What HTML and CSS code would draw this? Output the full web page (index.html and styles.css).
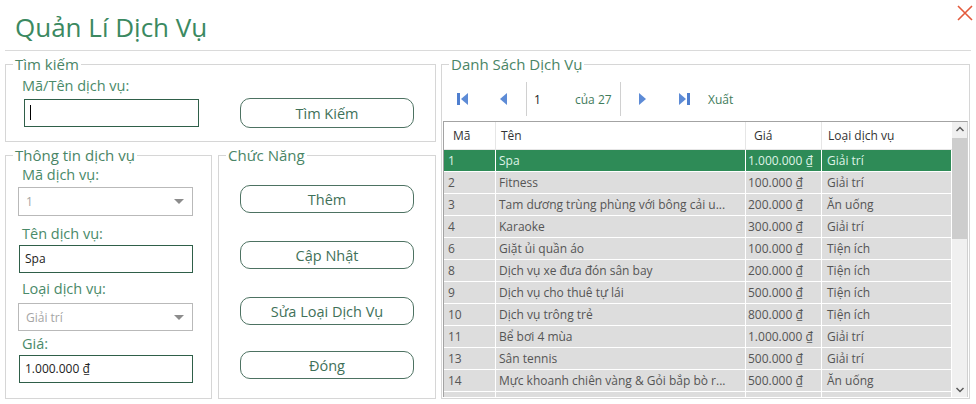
FILE: index.html
```html
<!DOCTYPE html>
<html lang="vi">
<head>
<meta charset="utf-8">
<title>Quản Lí Dịch Vụ</title>
<link rel="stylesheet" href="styles.css">
</head>
<body>
<div class="app">
  <header class="titlebar">
    <h1 class="title">Quản Lí Dịch Vụ</h1>
    <button class="close" aria-label="Đóng">
      <svg width="16" height="16" viewBox="0 0 16 16"><path d="M1 1 L15 15 M15 1 L1 15" stroke="#e35a3c" stroke-width="1.6" fill="none"/></svg>
    </button>
  </header>
  <main class="content">
    <div class="left">
      <fieldset class="group search">
        <legend>Tìm kiếm</legend>
        <div class="lbl lbl-search">Mã/Tên dịch vụ:</div>
        <div class="search-row">
          <div class="txt txt-search"><span class="caret"></span></div>
          <button class="btn btn-search">Tìm Kiếm</button>
        </div>
      </fieldset>
      <div class="left-bottom">
        <fieldset class="group info">
          <legend>Thông tin dịch vụ</legend>
          <div class="lbl l1">Mã dịch vụ:</div>
          <div class="combo c1"><span>1</span><i class="arrow"></i></div>
          <div class="lbl l2">Tên dịch vụ:</div>
          <div class="txt t2">Spa</div>
          <div class="lbl l3">Loại dịch vụ:</div>
          <div class="combo c3"><span>Giải trí</span><i class="arrow"></i></div>
          <div class="lbl l4">Giá:</div>
          <div class="txt t4">1.000.000 ₫</div>
        </fieldset>
        <fieldset class="group actions">
          <legend>Chức Năng</legend>
          <button class="btn">Thêm</button>
          <button class="btn">Cập Nhật</button>
          <button class="btn">Sửa Loại Dịch Vụ</button>
          <button class="btn">Đóng</button>
        </fieldset>
      </div>
    </div>
    <fieldset class="group list">
      <legend>Danh Sách Dịch Vụ</legend>
      <div class="toolbar">
        <span class="tb tb-first"><svg width="12" height="12" viewBox="0 0 12 12"><rect x="0" y="0" width="3" height="12" fill="#4f7fcf"/><path d="M11 0 L4 6 L11 12 Z" fill="#5d8bd6"/></svg></span>
        <span class="tb tb-prev"><svg width="8" height="12" viewBox="0 0 8 12"><path d="M7 0 L0 6 L7 12 Z" fill="#5d8bd6"/></svg></span>
        <span class="sep s1"></span>
        <span class="tb-pos">1</span>
        <span class="tb-of">của 27</span>
        <span class="sep"></span>
        <span class="tb tb-next"><svg width="8" height="12" viewBox="0 0 8 12"><path d="M0 0 L7 6 L0 12 Z" fill="#5d8bd6"/></svg></span>
        <span class="tb tb-last"><svg width="12" height="12" viewBox="0 0 12 12"><path d="M0 0 L7 6 L0 12 Z" fill="#5d8bd6"/><rect x="8" y="0" width="3" height="12" fill="#4f7fcf"/></svg></span>
        <span class="tb-export">Xuất</span>
      </div>
      <div class="table-wrap">
        <div class="grid">
          <div class="row head">
            <div class="c ma">Mã</div><div class="c ten">Tên</div><div class="c gia">Giá</div><div class="c loai">Loại dịch vụ</div>
          </div>
          <div class="row sel"><div class="c ma">1</div><div class="c ten">Spa</div><div class="c gia">1.000.000 ₫</div><div class="c loai">Giải trí</div></div>
          <div class="row"><div class="c ma">2</div><div class="c ten">Fitness</div><div class="c gia">100.000 ₫</div><div class="c loai">Giải trí</div></div>
          <div class="row"><div class="c ma">3</div><div class="c ten">Tam dương trùng phùng với bông cải u...</div><div class="c gia">200.000 ₫</div><div class="c loai">Ăn uống</div></div>
          <div class="row"><div class="c ma">4</div><div class="c ten">Karaoke</div><div class="c gia">300.000 ₫</div><div class="c loai">Giải trí</div></div>
          <div class="row"><div class="c ma">6</div><div class="c ten">Giặt ủi quần áo</div><div class="c gia">100.000 ₫</div><div class="c loai">Tiện ích</div></div>
          <div class="row"><div class="c ma">8</div><div class="c ten">Dịch vụ xe đưa đón sân bay</div><div class="c gia">200.000 ₫</div><div class="c loai">Tiện ích</div></div>
          <div class="row"><div class="c ma">9</div><div class="c ten">Dịch vụ cho thuê tự lái</div><div class="c gia">500.000 ₫</div><div class="c loai">Tiện ích</div></div>
          <div class="row"><div class="c ma">10</div><div class="c ten">Dịch vụ trông trẻ</div><div class="c gia">800.000 ₫</div><div class="c loai">Tiện ích</div></div>
          <div class="row"><div class="c ma">11</div><div class="c ten">Bể bơi 4 mùa</div><div class="c gia">1.000.000 ₫</div><div class="c loai">Giải trí</div></div>
          <div class="row"><div class="c ma">13</div><div class="c ten">Sân tennis</div><div class="c gia">500.000 ₫</div><div class="c loai">Giải trí</div></div>
          <div class="row"><div class="c ma">14</div><div class="c ten">Mực khoanh chiên vàng &amp; Gỏi bắp bò r...</div><div class="c gia">500.000 ₫</div><div class="c loai">Ăn uống</div></div>
          <div class="row partial"><div class="c ma"></div><div class="c ten"></div><div class="c gia"></div><div class="c loai"></div></div>
        </div>
        <div class="vscroll">
          <svg class="chev" width="16" height="14" viewBox="0 0 16 14"><path d="M4.5 9 L8 5.5 L11.5 9" stroke="#5a5a5a" stroke-width="1.5" fill="none"/></svg>
          <div class="thumb"></div>
          <div class="track-rest"></div>
          <svg class="chev" width="16" height="14" viewBox="0 0 16 14"><path d="M4.5 5 L8 8.5 L11.5 5" stroke="#5a5a5a" stroke-width="1.5" fill="none"/></svg>
        </div>
      </div>
    </fieldset>
  </main>
</div>
</body>
</html>
```
FILE: styles.css
```css
* { box-sizing: border-box; }
html, body { margin: 0; padding: 0; background: #fff; }
body {
  font-family: "Open Sans", "Noto Sans", "DejaVu Sans", sans-serif;
  color: #333;
  width: 976px;
  height: 404px;
  overflow: hidden;
}
.app { width: 976px; height: 404px; }

.titlebar {
  height: 51px;
  margin: 0 5px 0 5px;
  border-bottom: 1px solid #dadada;
  display: flex;
  justify-content: space-between;
  align-items: flex-start;
}
.title {
  margin: 0;
  padding: 9px 0 0 10px;
  font-size: 26px;
  line-height: 36px;
  font-weight: normal;
  color: #3b8961;
}
.close {
  margin: 5px -2px 0 0;
  padding: 0;
  border: 0;
  background: transparent;
  width: 16px;
  height: 16px;
}
.close svg { display: block; }

.content {
  display: flex;
  gap: 5px;
  padding: 6px 6px 0 5px;
}
.left { width: 431px; display: flex; flex-direction: column; gap: 6px; }
.left-bottom { display: flex; gap: 6px; }

.group {
  margin: 0;
  padding: 0;
  min-width: 0;
  border: 1px solid #d6d6d6;
}
.group legend {
  margin-left: 7px;
  padding: 0 2px;
  font-size: 15px;
  line-height: 14px;
  color: #4a8566;
}
.search { height: 85px; }
.info { width: 207px; height: 251px; }
.actions { width: 218px; height: 251px; display: flex; flex-direction: column; align-items: flex-start; }
.list { width: 529px; height: 342px; }

.lbl {
  font-size: 14.5px;
  line-height: 18px;
  color: #4a8a69;
  padding-left: 16px;
}
.lbl-search { margin-top: 6px; }
.search-row {
  display: flex;
  align-items: center;
  margin-top: 3px;
  padding-left: 18px;
}
.txt {
  height: 28px;
  border: 1px solid #2f5f49;
  background: #fff;
  font-size: 12px;
  line-height: 26px;
  color: #222;
  padding-left: 5px;
}
.txt-search { width: 175px; }
.caret {
  display: block;
  width: 1px;
  height: 15px;
  background: #000;
  margin: 5px 0 0 0;
}
.btn {
  width: 174px;
  height: 29px;
  border: 1px solid #4d7262;
  border-radius: 10px;
  background: #fff;
  font-family: inherit;
  font-size: 14.5px;
  color: #3f7159;
  padding: 0;
}
.btn-search { margin-left: 41px; height: 30px; }

.l1 { margin-top: 4px; }
.l2 { margin-top: 9px; }
.l3 { margin-top: 7px; }
.l4 { margin-top: 4px; }
.combo {
  width: 175px;
  height: 29px;
  margin-left: 12px;
  margin-top: 5px;
  border: 1px solid #b9b9b9;
  display: flex;
  align-items: center;
  justify-content: space-between;
  padding: 0 8px 0 7px;
  font-size: 12px;
  color: #a5a5a5;
}
.c1 { margin-top: 3px; }
.c3 { height: 28px; }
.arrow {
  width: 0; height: 0;
  border-left: 5px solid transparent;
  border-right: 5px solid transparent;
  border-top: 5px solid #8c8c8c;
}
.info .txt { width: 174px; margin-left: 13px; margin-top: 2px; }

.actions .btn { margin-left: 21px; height: 28px; }
.actions .btn:first-of-type { margin-top: 23px; }
.actions .btn + .btn { margin-top: 28px; }
.actions .btn:last-of-type { margin-top: 26px; }

.toolbar {
  display: flex;
  align-items: center;
  height: 34px;
  margin-top: 11px;
  font-size: 12px;
}
.tb { display: flex; align-items: center; }
.tb svg { display: block; }
.tb-first { margin-left: 15px; }
.tb-prev { margin-left: 31px; }
.sep { width: 1px; height: 34px; background: #d0d0d0; }
.s1 { margin-left: 18px; }
.tb-pos { width: 48px; padding-left: 7px; color: #222; }
.tb-of { width: 45px; color: #3f7c5c; }
.tb-next { margin-left: 18px; }
.tb-last { margin-left: 32px; }
.tb-export { margin-left: 17px; color: #3f7c5c; }

.table-wrap {
  margin: 5px 0 0 1px;
  width: 525px;
  height: 276px;
  border-left: 1px solid #a3a3a3;
  border-top: 1px solid #a3a3a3;
  border-right: 1px solid #d0d0d0;
  display: flex;
  overflow: hidden;
}
.grid { width: 508px; flex: none; }
.row {
  display: grid;
  grid-template-columns: 52px 250px 76px 130px;
  height: 22px;
  background: #dddddd;
  border-bottom: 1px solid #fff;
  font-size: 12px;
  color: #555;
}
.row .c {
  border-right: 1px solid #fff;
  line-height: 21px;
  white-space: nowrap;
  overflow: hidden;
}
.row .ma { padding-left: 4px; }
.row .ten { padding-left: 3px; }
.row .gia { padding-left: 2px; }
.row .loai { padding-left: 5px; }
.row.head {
  height: 28px;
  background: #fff;
  border-bottom: 1px solid #e6e6e6;
  color: #333;
}
.row.head .c { line-height: 27px; border-right: 1px solid #e6e6e6; }
.row.head .ma { padding-left: 9px; }
.row.head .ten { padding-left: 5px; }
.row.head .gia { padding-left: 8px; }
.row.head .loai { padding-left: 6px; border-right-color: #fff; }
.row.sel { background: #2e8b57; color: #dff3e6; }

.vscroll {
  width: 16px;
  flex: none;
  background: #f0f0f0;
  display: flex;
  flex-direction: column;
}
.chev { display: block; flex: none; }
.thumb { height: 101px; background: #cdcdcd; flex: none; margin-top: 2px; }
.track-rest { flex: 1; }
```
